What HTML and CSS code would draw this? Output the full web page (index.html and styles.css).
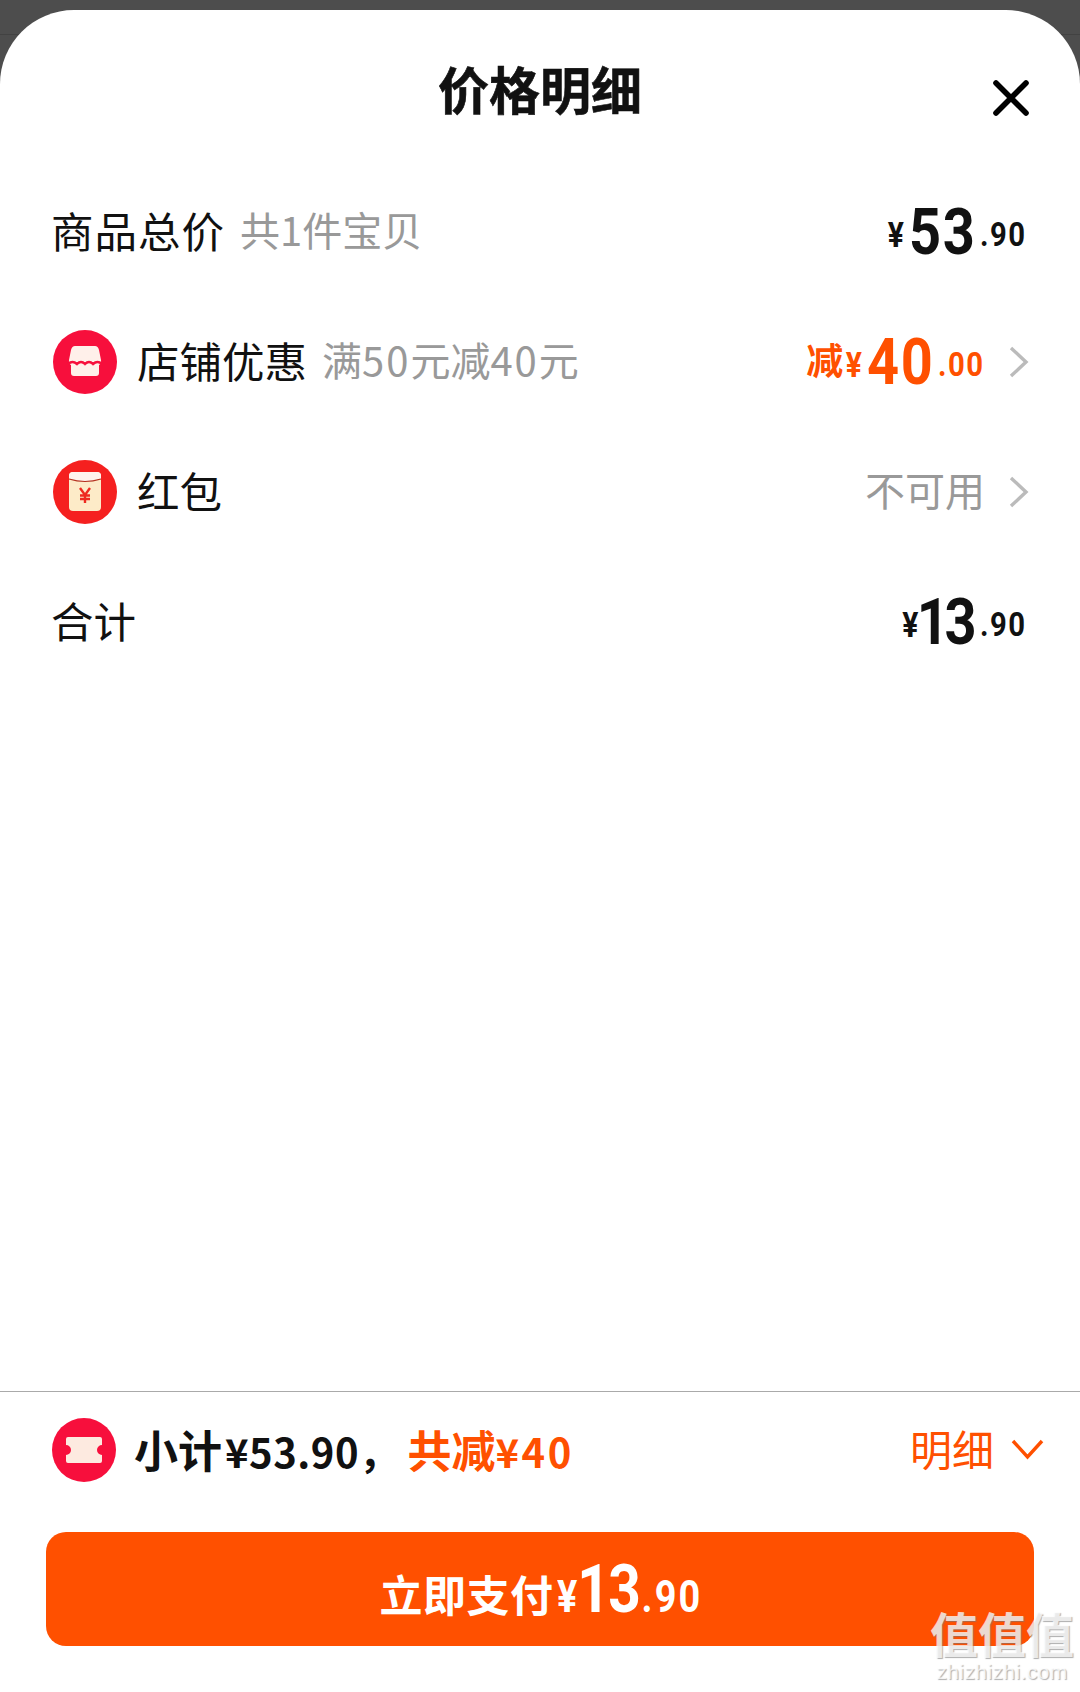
FILE: index.html
```html
<!DOCTYPE html>
<html lang="zh-CN">
<head>
  <meta charset="UTF-8">
  <title>价格明细</title>
  <link rel="stylesheet" href="styles.css">
</head>
<body>
  <div class="sheet">
    <header class="sheet-header">
      <h1>价格明细</h1>
      <svg class="close-icon" width="36" height="36" viewBox="0 0 36 36">
        <path d="M3 3 L33 33 M33 3 L3 33" stroke="#000" stroke-width="5.6" stroke-linecap="round" fill="none"/>
      </svg>
    </header>

    <div class="rows">
      <div class="row">
        <span class="label label-plain label-wide">商品总价</span>
        <span class="note note-first">共1件宝贝</span>
        <span class="price"><span class="yen">¥</span><span class="big">53</span><span class="cents">.90</span></span>
      </div>

      <div class="row">
        <svg class="row-icon" width="64" height="64" viewBox="0 0 64 64">
          <circle cx="32" cy="32" r="32" fill="#f70f3c"/>
          <path d="M22 16 H42 Q45 16 46 20 L48 30 Q48.5 34 46 35 V43 Q46 46 43 46 H21 Q18 46 18 43 V35 Q15.5 34 16 30 L18 20 Q19 16 22 16 Z" fill="#fff0ea"/>
          <path d="M15 34 Q19.500 30 24 34 Q28 30 32 34 Q36 30 40 34 Q44.500 30 49 34" stroke="#f70f3c" stroke-width="2.4" fill="none"/>
        </svg>
        <span class="label">店铺优惠</span>
        <span class="note">满<span class="note-num">50</span>元减<span class="note-num">40</span>元</span>
        <span class="off">减</span>
        <span class="price price-off"><span class="yen">¥</span><span class="big">40</span><span class="cents">.00</span></span>
        <svg class="chevron" width="20" height="32" viewBox="0 0 20 32">
          <path d="M2 2 L17 16 L2 30" stroke="#bbb" stroke-width="3.4" fill="none"/>
        </svg>
      </div>

      <div class="row">
        <svg class="row-icon" width="64" height="64" viewBox="0 0 64 64">
          <circle cx="32" cy="32" r="32" fill="#f5201f"/>
          <rect x="16" y="12" width="32" height="39" rx="4" fill="#fdebc8"/>
          <path d="M16 16 Q16 12 20 12 H44 Q48 12 48 16 V19 Q32 24 16 19 Z" fill="#fff3ee"/>
          <path d="M16 19 Q32 24 48 19" stroke="#b5321f" stroke-width="1.2" fill="none"/>
          <path d="M27 28 L32 35 L37 28 M27 35.5 H37 M27 39 H37 M32 35 V43" stroke="#ee2a20" stroke-width="2.4" fill="none"/>
        </svg>
        <span class="label">红包</span>
        <span class="status">不可用</span>
        <svg class="chevron" width="20" height="32" viewBox="0 0 20 32">
          <path d="M2 2 L17 16 L2 30" stroke="#bbb" stroke-width="3.4" fill="none"/>
        </svg>
      </div>

      <div class="row">
        <span class="label label-plain">合计</span>
        <span class="price"><span class="yen">¥</span><span class="big big-one">13</span><span class="cents">.90</span></span>
      </div>
    </div>

    <footer class="sheet-footer">
      <div class="summary">
        <svg class="row-icon" width="64" height="64" viewBox="0 0 64 64">
          <circle cx="32" cy="32" r="32" fill="#f70f3c"/>
          <path d="M16 19 H48 Q50 19 50 21 V27 A5 5 0 0 0 50 37 V43 Q50 45 48 45 H16 Q14 45 14 43 V37 A5 5 0 0 0 14 27 V21 Q14 19 16 19 Z" fill="#fdeae0"/>
        </svg>
        <span class="summary-text">小计<span class="summary-num">¥53.90，</span></span>
        <span class="summary-text summary-off">共减<span class="summary-num">¥40</span></span>
        <span class="detail">明细</span>
        <svg class="chevron-down" width="33" height="22" viewBox="0 0 33 22">
          <path d="M2 3 L16.5 19 L31 3" stroke="#ff5000" stroke-width="3.4" fill="none"/>
        </svg>
      </div>
      <button class="pay-btn"><span class="pay-label">立即支付</span><span class="pay-amount"><span class="pay-yen">¥</span><span class="pay-big">13</span><span class="pay-cents">.90</span></span></button>
    </footer>
  </div>

  <div class="watermark">
    <div class="wm-mark">值值值</div>
    <div class="wm-url">zhizhizhi.com</div>
  </div>
</body>
</html>
```

FILE: styles.css
```css
html, body {
  margin: 0;
  padding: 0;
}

body {
  width: 1080px;
  height: 1692px;
  overflow: hidden;
  position: relative;
  background: linear-gradient(#4d4d4d 34px, #424242 34px, #424242 35px, #4d4d4d 35px);
  font-family: "Noto Sans CJK SC", "Liberation Sans", sans-serif;
  color: #111;
}

.sheet {
  margin-top: 10px;
  height: 1682px;
  background-color: #fff;
  border-radius: 74px 74px 0 0;
  display: flex;
  flex-direction: column;
}

.sheet-header {
  height: 157px;
  position: relative;
}

.sheet-header h1 {
  margin: 0;
  padding-top: 37px;
  text-align: center;
  font-size: 51px;
  line-height: 82px;
  font-weight: 700;
  -webkit-text-stroke: 0.6px #111;
}

.close-icon {
  position: absolute;
  top: 70px;
  right: 51px;
}

.row {
  height: 130px;
  padding: 0 53px 0 53px;
  display: flex;
  align-items: center;
}

.row-icon {
  flex-shrink: 0;
  margin-right: 20px;
}

.label {
  font-size: 42.5px;
  margin-bottom: 6px;
}

.label-plain {
  margin-left: -2px;
}

.label-wide {
  letter-spacing: 1px;
}

.note {
  margin: 0 0 6px 15px;
  font-size: 40px;
  color: #999;
}

.note-first {
  margin-left: 15px;
}

.note-num {
  letter-spacing: 2px;
}

.status {
  margin: 0 0 6px auto;
  font-size: 40px;
  color: #999;
}

.price {
  margin-left: auto;
  white-space: nowrap;
  font-family: Roboto, sans-serif;
  font-weight: 700;
  color: #111;
  transform: scaleX(0.86);
  transform-origin: right center;
}

.price .yen {
  font-size: 35px;
  margin-right: 6px;
  vertical-align: 7px;
}

.price .big {
  font-size: 65px;
  line-height: 65px;
  letter-spacing: 2px;
}

.price .big-one {
  margin: 0 5px 0 -8px;
  letter-spacing: -5px;
}

.price .cents {
  font-size: 34px;
  margin-left: 4px;
  letter-spacing: 1.8px;
  vertical-align: 8px;
}

.off {
  margin: 0 0 6px auto;
  font-size: 37px;
  font-weight: 700;
  color: #ff5000;
}

.price-off {
  margin-left: -20px;
  color: #ff5000;
}

.chevron {
  margin-left: 24px;
  margin-right: -2px;
}

.sheet-footer {
  margin-top: auto;
  border-top: 1px solid #aaa;
  padding-bottom: 46px;
}

.summary {
  height: 116px;
  margin-bottom: 24px;
  padding: 0 36px 0 52px;
  display: flex;
  align-items: center;
}

.summary .row-icon {
  margin-right: 18px;
}

.summary-text {
  font-size: 44px;
  font-weight: 700;
  margin-bottom: 3px;
}

.summary-num {
  margin-left: 3px;
  font-size: 40px;
  letter-spacing: 0.5px;
}

.summary-off {
  margin-left: 8px;
  color: #ff5000;
}

.summary-off .summary-num {
  margin-left: 0;
  letter-spacing: 2.5px;
}

.detail {
  margin: 0 0 6px auto;
  font-size: 42px;
  color: #ff5000;
}

.chevron-down {
  margin: 0 0 3px 17px;
}

.pay-btn {
  display: flex;
  align-items: baseline;
  justify-content: center;
  width: 988px;
  height: 114px;
  margin: 0 0 0 46px;
  padding: 27px 0 0 26px;
  border: 0;
  border-radius: 20px;
  background-color: #ff5000;
  color: #fff;
  font-family: "Noto Sans CJK SC", sans-serif;
  font-size: 43px;
  font-weight: 700;
}

.pay-label {
  letter-spacing: 0.5px;
}

.pay-amount {
  font-family: Roboto, sans-serif;
  margin-left: 4px;
  transform: scaleX(0.86);
  transform-origin: left center;
}

.pay-yen {
  font-size: 44px;
  margin-right: 2px;
}

.pay-big {
  font-size: 66px;
  line-height: 62px;
  margin-left: -2px;
  letter-spacing: -2px;
}

.pay-cents {
  font-size: 44px;
  margin-left: 3px;
  letter-spacing: 2.5px;
}

.watermark {
  position: absolute;
  left: 928px;
  top: 1604px;
  width: 148px;
  text-align: center;
  color: rgba(255, 255, 255, 0.75);
  text-shadow: 1px 1px 1px rgba(120, 120, 120, 0.6);
}

.wm-mark {
  font-size: 48px;
  line-height: 56px;
  font-weight: 700;
}

.wm-url {
  font-family: "Liberation Sans", sans-serif;
  font-size: 21px;
  line-height: 24px;
  letter-spacing: 0.4px;
}
```
